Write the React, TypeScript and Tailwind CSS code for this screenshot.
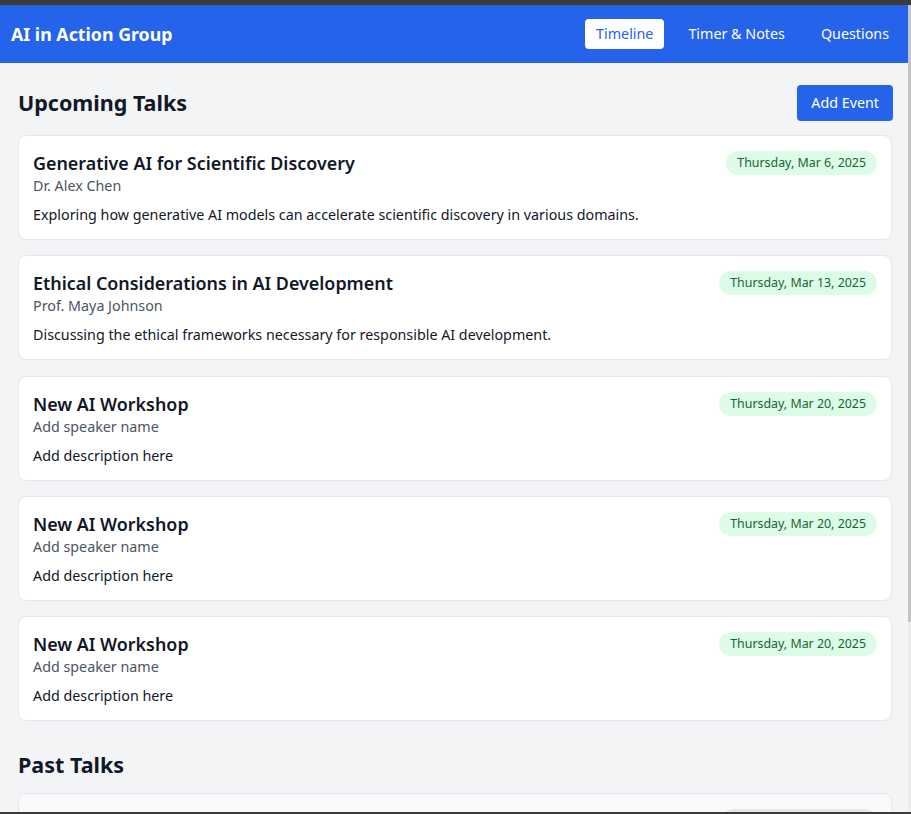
import React from "react";

type Talk = { title: string; speaker: string; desc: string; date: string };

const upcoming: Talk[] = [
  {
    title: "Generative AI for Scientific Discovery",
    speaker: "Dr. Alex Chen",
    desc: "Exploring how generative AI models can accelerate scientific discovery in various domains.",
    date: "Thursday, Mar 6, 2025",
  },
  {
    title: "Ethical Considerations in AI Development",
    speaker: "Prof. Maya Johnson",
    desc: "Discussing the ethical frameworks necessary for responsible AI development.",
    date: "Thursday, Mar 13, 2025",
  },
  { title: "New AI Workshop", speaker: "Add speaker name", desc: "Add description here", date: "Thursday, Mar 20, 2025" },
  { title: "New AI Workshop", speaker: "Add speaker name", desc: "Add description here", date: "Thursday, Mar 20, 2025" },
  { title: "New AI Workshop", speaker: "Add speaker name", desc: "Add description here", date: "Thursday, Mar 20, 2025" },
];

function Card({ t, past }: { t: Talk; past?: boolean }) {
  return (
    <div
      className={`rounded-lg border border-[#e5e7eb] px-3.5 pt-[15px] pb-[14px] ${past ? "bg-[#f9fafb]" : "bg-white"}`}
    >
      <div className="flex items-start justify-between">
        <div>
          <h3 className="text-[17.9px] font-semibold leading-[25px] text-[#111827]">{t.title}</h3>
          <p className="text-[14.3px] leading-5 text-[#4b5563]">{t.speaker}</p>
        </div>
        <span
          className={`rounded-full px-[11px] py-1 text-[12.4px] leading-4 ${
            past ? "bg-[#e5e7eb] text-[#374151]" : "bg-[#dcfce7] text-[#166534]"
          }`}
        >
          {t.date}
        </span>
      </div>
      <p className="mt-[9px] text-[14.3px] leading-5 text-[#111827]">{t.desc}</p>
    </div>
  );
}

export default function App() {
  return (
    <div
      className="flex h-[814px] w-[911px] flex-col overflow-hidden bg-[#f3f4f6]"
      style={{ fontFamily: "'Noto Sans', 'Open Sans', sans-serif" }}
    >
      <div className="h-[5px] shrink-0 bg-[#3b3b39]" />
      <div className="flex min-h-0 flex-1">
        <div className="flex min-w-0 flex-1 flex-col">
          <nav className="flex h-[58px] shrink-0 items-center justify-between bg-[#2563eb] pl-[11px] pr-[7px] text-white">
            <h1 className="text-[17.8px] font-bold">AI in Action Group</h1>
            <div className="flex gap-3 text-[14.3px]">
              <button className="rounded bg-white px-[11px] py-[4.5px] text-[#2563eb]">Timeline</button>
              <button className="rounded px-3 py-[4.5px] text-white">Timer &amp; Notes</button>
              <button className="rounded px-3 py-[4.5px] text-white">Questions</button>
            </div>
          </nav>
          <main className="pl-[18px] pr-[15px] pt-[22px]">
            <div className="mb-[14px] flex items-center justify-between">
              <h2 className="text-[21.5px] font-bold text-[#111827]">Upcoming Talks</h2>
              <button className="rounded bg-[#2563eb] px-[14px] py-2 text-[14.3px] leading-5 text-white">
                Add Event
              </button>
            </div>
            <div className="mr-px flex flex-col gap-[15.25px]">
              {upcoming.map((t, i) => (
                <Card key={i} t={t} />
              ))}
            </div>
            <h2 className="mt-7 mb-3 text-[21.5px] font-bold leading-8 text-[#111827]">Past Talks</h2>
            <div className="mr-px">
              <Card
                past
                t={{
                  title: "Introduction to Large Language Models",
                  speaker: "Dr. Sarah Lee",
                  desc: "An overview of large language models.",
                  date: "Thursday, Feb 27, 2025",
                }}
              />
            </div>
          </main>
        </div>
        <div className="flex w-[3px] shrink-0 flex-col bg-[#ececec]">
          <div className="h-[617px] bg-[#c4c4c4]" />
        </div>
      </div>
      <div className="h-[2px] shrink-0 bg-[#3b3b39]" />
    </div>
  );
}
